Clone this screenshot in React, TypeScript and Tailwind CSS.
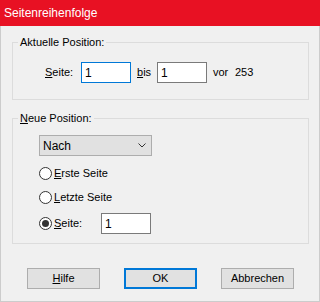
import React from 'react';

const Radio = ({ checked }: { checked?: boolean }) => (
  <div className="w-[13px] h-[13px] rounded-full border border-[#333333] bg-white flex items-center justify-center shrink-0">
    {checked && <div className="w-[7px] h-[7px] rounded-full bg-[#333333]" />}
  </div>
);

const TextBox = ({ value, focused, className = '' }: { value: string; focused?: boolean; className?: string }) => (
  <div
    className={`w-[50px] h-[21px] bg-white border flex items-center pl-[3px] text-[12px] ${
      focused ? 'border-[#0078d7]' : 'border-[#7a7a7a]'
    } ${className}`}
  >
    {value}
  </div>
);

const Button = ({ children, isDefault }: { children: React.ReactNode; isDefault?: boolean }) => (
  <div
    className={`w-[73px] h-[21px] bg-[#e1e1e1] flex items-center justify-center ${
      isDefault ? 'border-2 border-[#0078d7]' : 'border border-[#adadad]'
    }`}
  >
    {children}
  </div>
);

export default function App() {
  return (
    <div className="w-[320px] h-[302px] bg-[#f0f0f0] border-x border-b border-[#cccccc] flex flex-col font-['Liberation_Sans',Arial,sans-serif] text-[11px] text-black">
      {/* Title bar */}
      <div className="h-[26px] -mx-px bg-[#e81123] text-white flex items-center pl-[4px] text-[12px] shrink-0">
        Seitenreihenfolge
      </div>

      <div className="flex flex-col pl-[11px] pr-[10px]">
        {/* Aktuelle Position */}
        <fieldset className="mt-[10px] border border-[#dcdcdc] pb-[16px]">
          <legend className="ml-[5px] px-[2px] leading-[13px]">Aktuelle Position:</legend>
          <div className="mt-[13px] flex items-center pl-[32px]">
            <span className="w-[36px]">
              <span className="underline">S</span>eite:
            </span>
            <TextBox value="1" focused />
            <span className="ml-[6px] w-[20px]">
              <span className="underline">b</span>is
            </span>
            <TextBox value="1" />
            <span className="ml-[6px] w-[22px]">vor</span>
            <span>253</span>
          </div>
        </fieldset>

        {/* Neue Position */}
        <fieldset className="mt-[12px] border border-[#dcdcdc] pb-[9px]">
          <legend className="ml-[5px] px-[2px] leading-[13px]">
            <span className="underline">N</span>eue Position:
          </legend>
          <div className="pl-[26px] flex flex-col">
            <div className="mt-[10px] w-[113px] h-[21px] bg-[#e1e1e1] border border-[#adadad] flex items-center justify-between pl-[3px] pr-[5px] text-[12px]">
              <span>Nach</span>
              <svg width="8" height="5" viewBox="0 0 8 5" fill="none">
                <path d="M0.5 0.5 L4 4 L7.5 0.5" stroke="#333333" strokeWidth="1" />
              </svg>
            </div>
            <div className="mt-[8px] h-[18px] flex items-center gap-[2px]">
              <Radio />
              <span>
                <span className="underline">E</span>rste Seite
              </span>
            </div>
            <div className="mt-[6px] h-[18px] flex items-center gap-[2px]">
              <Radio />
              <span>
                <span className="underline">L</span>etzte Seite
              </span>
            </div>
            <div className="mt-[7px] h-[21px] flex items-center">
              <Radio checked />
              <span className="ml-[2px] w-[47px]">
                <span className="underline">S</span>eite:
              </span>
              <TextBox value="1" />
            </div>
          </div>
        </fieldset>
      </div>

      {/* Buttons */}
      <div className="mt-[24px] pl-[26px] flex gap-[24px]">
        <Button>
          <span>
            <span className="underline">H</span>ilfe
          </span>
        </Button>
        <Button isDefault>OK</Button>
        <Button>Abbrechen</Button>
      </div>
    </div>
  );
}
